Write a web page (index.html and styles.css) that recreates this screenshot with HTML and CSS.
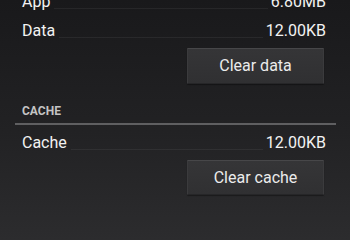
FILE: index.html
```html
<!DOCTYPE html>
<html>
<head>
<meta charset="utf-8">
<link rel="stylesheet" href="styles.css">
</head>
<body>
<div class="screen">
  <div class="row row-first"><span class="label">App</span><span class="leader"></span><span class="value">6.80MB</span></div>
  <div class="row"><span class="label">Data</span><span class="leader"></span><span class="value">12.00KB</span></div>
  <div class="actions"><button class="btn">Clear data</button></div>
  <div class="header">CACHE</div>
  <div class="divider"></div>
  <div class="row"><span class="label">Cache</span><span class="leader"></span><span class="value">12.00KB</span></div>
  <div class="actions"><button class="btn">Clear cache</button></div>
</div>
</body>
</html>
```
FILE: styles.css
```css
html {
  margin: 0;
  padding: 0;
  background: #2c2c2e;
}
body {
  margin: 0;
  padding: 0;
  font-family: Roboto, "Noto Sans", sans-serif;
  color: #f2f2f2;
}
.screen {
  box-sizing: border-box;
  height: 208px;
  min-height: 100vh;
  overflow: hidden;
  background: linear-gradient(to bottom, #19191b 0%, #222224 55%, #2c2c2e 100%);
  padding: 0 14px 0 15px;
  display: flex;
  flex-direction: column;
}
.row {
  display: flex;
  align-items: flex-start;
  flex: none;
  height: 29px;
  line-height: 29px;
  font-size: 16px;
  padding: 0 10px 0 7px;
  margin-top: 3px;
}
.row-first {
  margin-top: -13px;
}
.row + .row {
  margin-top: 0;
}
.label {
  color: #f2f2f2;
}
.value {
  color: #f2f2f2;
}
.leader {
  flex: 1;
  height: 21px;
  margin: 0 3px 0 4px;
  border-bottom: 1px solid rgba(255, 255, 255, 0.06);
}
.actions {
  display: flex;
  flex: none;
  justify-content: flex-end;
  padding-right: 12px;
  margin-top: 3px;
}
.btn {
  width: 137px;
  height: 36px;
  font-family: Roboto, "Noto Sans", sans-serif;
  font-size: 16px;
  color: #ebebeb;
  background: linear-gradient(to bottom, #353537, #303032);
  border: 1px solid #3b3b3d;
  border-top-color: #474749;
  border-bottom-color: #262628;
  border-radius: 1px;
  padding: 0 0 1px 0;
  box-shadow: 0 1px 1px rgba(0, 0, 0, 0.35);
}
.header {
  flex: none;
  margin-top: 20px;
  padding-left: 7px;
  font-size: 12px;
  line-height: 14px;
  font-weight: bold;
  color: #c4c4c4;
}
.divider {
  flex: none;
  margin-top: 5px;
  height: 2px;
  background: #5f5f61;
}
.divider + .row {
  margin-top: 3px;
}
.actions:last-child .btn {
  height: 35px;
}
```
